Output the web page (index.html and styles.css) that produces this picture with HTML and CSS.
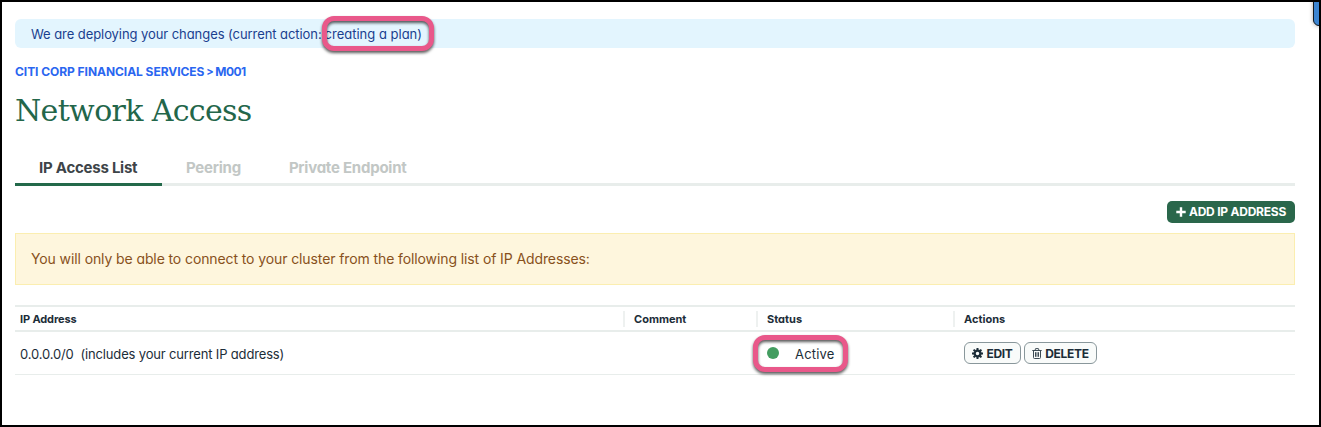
FILE: index.html
```
<!DOCTYPE html>
<html lang="en">
<head>
<meta charset="utf-8">
<title>Network Access</title>
<link rel="stylesheet" href="styles.css">
</head>
<body>
<div class="page">
  <div class="corner-widget"></div>
  <div class="deploy-banner"><span class="deploy-text">We are deploying your changes (current action:<span class="marked">creating a plan)<i class="marker marker-plan"></i></span></span></div>
  <div class="breadcrumb"><span>CITI CORP FINANCIAL SERVICES</span><span class="crumb-sep">&gt;</span><span class="crumb-last">M001</span></div>
  <h1 class="title"><span>Network Access</span></h1>
  <nav class="tabs">
    <a class="tab tab-active"><span>IP Access List</span></a>
    <a class="tab"><span>Peering</span></a>
    <a class="tab"><span>Private Endpoint</span></a>
  </nav>
  <div class="toolbar">
    <button class="add-button"><svg width="10" height="10" viewBox="0 0 10 10"><path d="M5 .3v9.4M.3 5h9.4" stroke="#fff" stroke-width="2.4"/></svg><span>ADD IP ADDRESS</span></button>
  </div>
  <div class="notice"><span>You will only be able to connect to your cluster from the following list of IP Addresses:</span></div>
  <div class="table">
    <div class="row head">
      <div class="cell"><span>IP Address</span></div>
      <div class="cell"><span>Comment</span></div>
      <div class="cell"><span>Status</span></div>
      <div class="cell"><span>Actions</span></div>
    </div>
    <div class="row body">
      <div class="cell"><span class="address">0.0.0.0/0&nbsp; (includes your current IP address)</span></div>
      <div class="cell"></div>
      <div class="cell status"><i class="dot"></i><span class="state">Active</span><i class="marker marker-status"></i></div>
      <div class="cell actions">
        <button class="action"><svg width="11" height="11" viewBox="0 0 11 11"><circle cx="5.5" cy="5.5" r="2.9" fill="none" stroke="#1c2d38" stroke-width="2.3"/><path d="M5.5 0v2M5.5 9v2M0 5.5h2M9 5.5h2M1.6 1.6l1.4 1.4M8 8l1.4 1.4M1.6 9.4L3 8M8 3l1.4-1.4" stroke="#1c2d38" stroke-width="2"/></svg><span>EDIT</span></button>
        <button class="action delete"><svg width="10" height="11" viewBox="0 0 10 11" fill="none" stroke="#3d4b54" stroke-width="1"><path d="M.3 2.5h9.4M3 2.3l.6-1.7h2.8L7 2.3M1.5 2.7v6.8q0 1 1 1h5q1 0 1-1V2.7M3.5 4.2v4.6M5 4.2v4.6M6.5 4.2v4.6"/></svg><span>DELETE</span></button>
      </div>
    </div>
  </div>
</div>
</body>
</html>
```
FILE: styles.css
```
* { box-sizing: border-box; }
body {
  margin: 0;
  font-family: Inter, "Open Sans", sans-serif;
  font-feature-settings: "cv11";
  color: #1c2d38;
  background: #fff;
}
.page {
  position: relative;
  width: 1321px;
  height: 427px;
  padding: 17px 24px 0 13px;
  border: 2px solid #000;
  overflow: hidden;
}
span { white-space: nowrap; }
.corner-widget {
  position: absolute;
  right: -9px;
  top: -8px;
  width: 15px;
  height: 32px;
  border: 1px solid #10161c;
  border-radius: 6px;
  background: #3b84d1;
  box-shadow: 0 0 4px rgba(0, 0, 0, .35);
}
.deploy-banner {
  display: flex;
  align-items: center;
  height: 29px;
  padding: 1px 16px 0;
  border-radius: 6px;
  background: #e3f5fe;
  color: #1a3f8f;
  font-size: 13px;
}
.deploy-text { letter-spacing: -.07px; }
.marked { position: relative; margin-left: 3px; letter-spacing: 0; }
.marker {
  position: absolute;
  border: 5px solid #e9588a;
  border-radius: 12px;
  filter: drop-shadow(0 2px 1.5px rgba(0, 0, 0, .65));
}
.marker-plan { left: -3px; top: -10px; width: 112px; height: 35px; }
.breadcrumb {
  display: flex;
  height: 17px;
  margin-top: 15px;
  line-height: 17px;
  font-size: 12px;
  font-weight: 650;
  letter-spacing: -.05px;
  color: #2a66f0;
}
.crumb-sep { width: 11px; padding-left: 2px; font-size: 11px; }
.crumb-last { letter-spacing: -.6px; }
.title {
  height: 44px;
  margin: 9px 0 0;
  line-height: 44px;
  font-family: "DejaVu Serif", serif;
  font-size: 30px;
  letter-spacing: -.65px;
  font-weight: 400;
  color: #23664a;
}
.tabs {
  display: flex;
  height: 34px;
  margin-top: 19px;
  box-shadow: inset 0 -3px #e8edeb;
}
.tab {
  padding: 0 24px;
  line-height: 31px;
  font-size: 15px;
  font-weight: 700;
  letter-spacing: -.24px;
  color: #c2c7c5;
}
.tab-active {
  width: 147px;
  color: #3d4448;
  border-bottom: 3px solid #23694a;
}
.toolbar { display: flex; justify-content: flex-end; margin-top: 15px; }
button { font: inherit; font-feature-settings: inherit; margin: 0; }
.add-button {
  display: flex;
  align-items: center;
  justify-content: center;
  gap: 3px;
  width: 128px;
  height: 22px;
  padding: 0 0 1px;
  border: 0;
  border-radius: 5px;
  background: #2a674b;
  color: #fff;
  font-size: 12px;
  font-weight: 700;
  letter-spacing: -.22px;
}
.notice {
  display: flex;
  align-items: center;
  height: 52px;
  margin-top: 10px;
  padding: 0 15px 2px;
  border: 1px solid #fbeeb0;
  background: #fef6dd;
  color: #88511c;
  font-size: 14px;
  letter-spacing: -.105px;
}
.table { margin-top: 20px; border-top: 2px solid #e8edeb; }
.row { display: grid; grid-template-columns: 608px 133px 197px 1fr; align-items: center; }
.head { height: 25px; border-bottom: 2px solid #e8edeb; font-size: 11px; font-weight: 700; }
.body { height: 43px; border-bottom: 1px solid #e8edeb; font-size: 13px; }
.cell { padding-left: 11px; }
.cell:first-child { padding-left: 5px; }
.head .cell { height: 16px; line-height: 16px; }
.head .cell:first-child { letter-spacing: -.12px; }
.head .cell + .cell { border-left: 2px solid #eef1f0; padding-left: 9px; }
.body .cell:first-child { padding-top: 1px; }
.address { letter-spacing: -.16px; }
.state { padding-top: 1px; letter-spacing: .2px; }
.status { position: relative; display: flex; align-items: center; padding-left: 11px; }
.dot { width: 12px; height: 12px; margin-right: 16px; border-radius: 50%; background: #439d60; }
.marker-status { left: -3px; top: -10px; width: 95px; height: 37px; }
.actions { display: flex; gap: 3px; }
.action {
  display: flex;
  align-items: center;
  justify-content: center;
  gap: 3px;
  width: 57px;
  height: 22px;
  padding: 0;
  border: 1px solid #89979b;
  border-radius: 6px;
  background: #f9fbfa;
  color: #1c2d38;
  font-size: 12px;
  font-weight: 700;
  letter-spacing: -.3px;
}
.delete { width: 73px; }
```
